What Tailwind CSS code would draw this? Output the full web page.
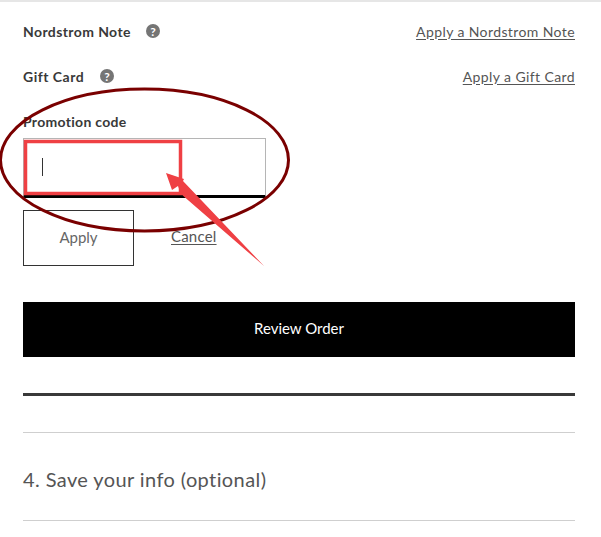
<!DOCTYPE html>
<html lang="en">
<head>
  <meta charset="UTF-8">
  <title>Checkout</title>
  <script src="https://cdn.jsdelivr.net/npm/@tailwindcss/browser@4"></script>
</head>
<body class="bg-white h-[537px] overflow-hidden relative font-['Lato','Noto_Sans',sans-serif] text-[#393939]">

  <div class="border-t-2 border-[#e6e6e6] pl-[23px] pr-[26px]">

    <div class="flex items-center justify-between h-[24px] mt-[17px]">
      <div class="flex items-center gap-[15px]">
        <span class="text-[14px] font-bold tracking-[0.4px]">Nordstrom Note</span>
        <svg width="14" height="14" viewBox="0 0 14 14"><circle cx="7" cy="7" r="7" fill="#757575"/><text x="7" y="11.5" text-anchor="middle" font-size="12" font-weight="700" fill="#fff">?</text></svg>
      </div>
      <a class="text-[14px] underline underline-offset-2 tracking-[0.4px] text-[#555]">Apply a Nordstrom Note</a>
    </div>

    <div class="flex items-center justify-between h-[24px] mt-[21px]">
      <div class="flex items-center gap-[16px]">
        <span class="text-[14px] font-bold tracking-[0.5px]">Gift Card</span>
        <svg width="14" height="14" viewBox="0 0 14 14"><circle cx="7" cy="7" r="7" fill="#757575"/><text x="7" y="11.5" text-anchor="middle" font-size="12" font-weight="700" fill="#fff">?</text></svg>
      </div>
      <a class="text-[14px] underline underline-offset-2 tracking-[0.4px] text-[#555]">Apply a Gift Card</a>
    </div>

    <label class="block text-[14px] font-bold tracking-[0.3px] leading-[20px] mt-[24px]">Promotion code</label>

    <div class="w-[243px] h-[60px] mt-[6px] border border-b-[3px] border-[#b5b5b5] border-b-black flex items-center pl-[18px]">
      <div class="w-px h-[18px] bg-[#333]"></div>
    </div>

    <div class="flex items-center gap-[37px] mt-[12px]">
      <button class="w-[111px] h-[56px] border border-[#333] text-[15px] text-[#666] pb-[2px]">Apply</button>
      <a class="text-[15px] underline underline-offset-2 tracking-[0.2px] text-[#555] mb-[4px]">Cancel</a>
    </div>

    <button class="w-full h-[55px] bg-black text-white text-[15px] pb-[2px] mt-[36px]">Review Order</button>

    <div class="h-[3px] bg-[#393939] mt-[36px]"></div>
    <div class="h-px bg-[#cfcfcf] mt-[36px]"></div>

    <h2 class="h-[87px] flex items-center pt-[4px] text-[20px] tracking-[0.4px] text-[#555]">4. Save your info (optional)</h2>
    <div class="h-px bg-[#cfcfcf]"></div>
  </div>

  <!-- annotations drawn over the screenshot -->
  <svg class="absolute left-0 top-0 pointer-events-none" width="601" height="537" viewBox="0 0 601 537" fill="none">
    <ellipse cx="144.5" cy="160" rx="144" ry="71" stroke="#7a0000" stroke-width="3"/>
    <rect x="25.5" y="141.5" width="155" height="52" stroke="#ef4044" stroke-width="3.5"/>
    <path d="M166 173 L184 179 L183 181 L264 266 L181 194 L178 186 L172 190 Z" fill="#ef4044"/>
  </svg>

</body>
</html>
